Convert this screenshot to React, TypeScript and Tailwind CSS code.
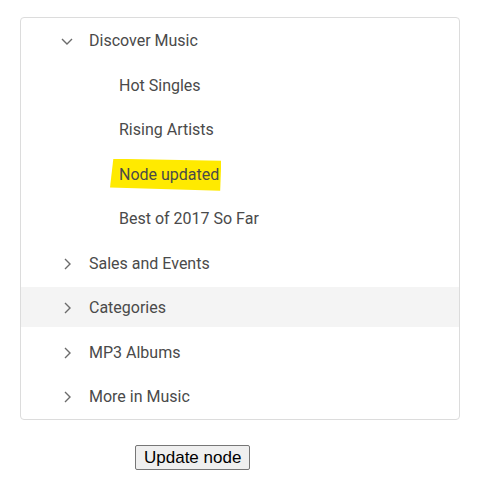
const items = [
  { text: "Discover Music", level: 0, icon: "down" },
  { text: "Hot Singles", level: 1 },
  { text: "Rising Artists", level: 1 },
  { text: "Node updated", level: 1, marked: true },
  { text: "Best of 2017 So Far", level: 1 },
  { text: "Sales and Events", level: 0, icon: "right" },
  { text: "Categories", level: 0, icon: "right", hover: true },
  { text: "MP3 Albums", level: 0, icon: "right" },
  { text: "More in Music", level: 0, icon: "right" },
];

const Chevron = ({ dir }: { dir: string }) => (
  <svg width="14" height="14" viewBox="0 0 14 14" className="text-[#6b6b6b]">
    {dir === "down" ? (
      <path d="M2 5 L7 10 L12 5" fill="none" stroke="currentColor" strokeWidth="1.4" />
    ) : (
      <path d="M5 2 L10 7 L5 12" fill="none" stroke="currentColor" strokeWidth="1.4" />
    )}
  </svg>
);

export default function App() {
  return (
    <div className="w-[487px] h-[491px] bg-white font-['Roboto',sans-serif]">
      <div className="pt-[17px] pl-[20px]">
        <div className="w-[440px] border border-[#dcdcdc] rounded-[4px]">
          {items.map((it) => (
            <div key={it.text} className="h-[44.5px] flex items-center">
              <div
                className={`h-10 w-full flex items-center pt-[2px] ${it.hover ? "bg-[#f4f4f4]" : ""}`}
              >
                {it.level === 0 ? (
                  <div className="flex items-center pl-[39px]">
                    <Chevron dir={it.icon || "right"} />
                    <span className="ml-[15px] text-[16px] text-[#4a4a4a]">{it.text}</span>
                  </div>
                ) : (
                  <div className="pl-[98px]">
                    <span
                      className={`text-[16px] text-[#4a4a4a] ${
                        it.marked
                          ? "bg-[#ffea00] text-[#3a3a00] pl-[9px] pr-[2px] -ml-[9px] py-[4px] inline-block [clip-path:polygon(3%_0,100%_6%,99%_100%,0_90%)]"
                          : ""
                      }`}
                    >
                      {it.text}
                    </span>
                  </div>
                )}
              </div>
            </div>
          ))}
        </div>
      </div>
      <div className="pl-[135px] pt-[25px]">
        <button className="h-[25px] px-[8px] bg-[#efefef] border border-[#767676] rounded-[2px] text-[17px] leading-none text-black font-['Liberation_Sans',Arial,sans-serif]">
          Update node
        </button>
      </div>
    </div>
  );
}
